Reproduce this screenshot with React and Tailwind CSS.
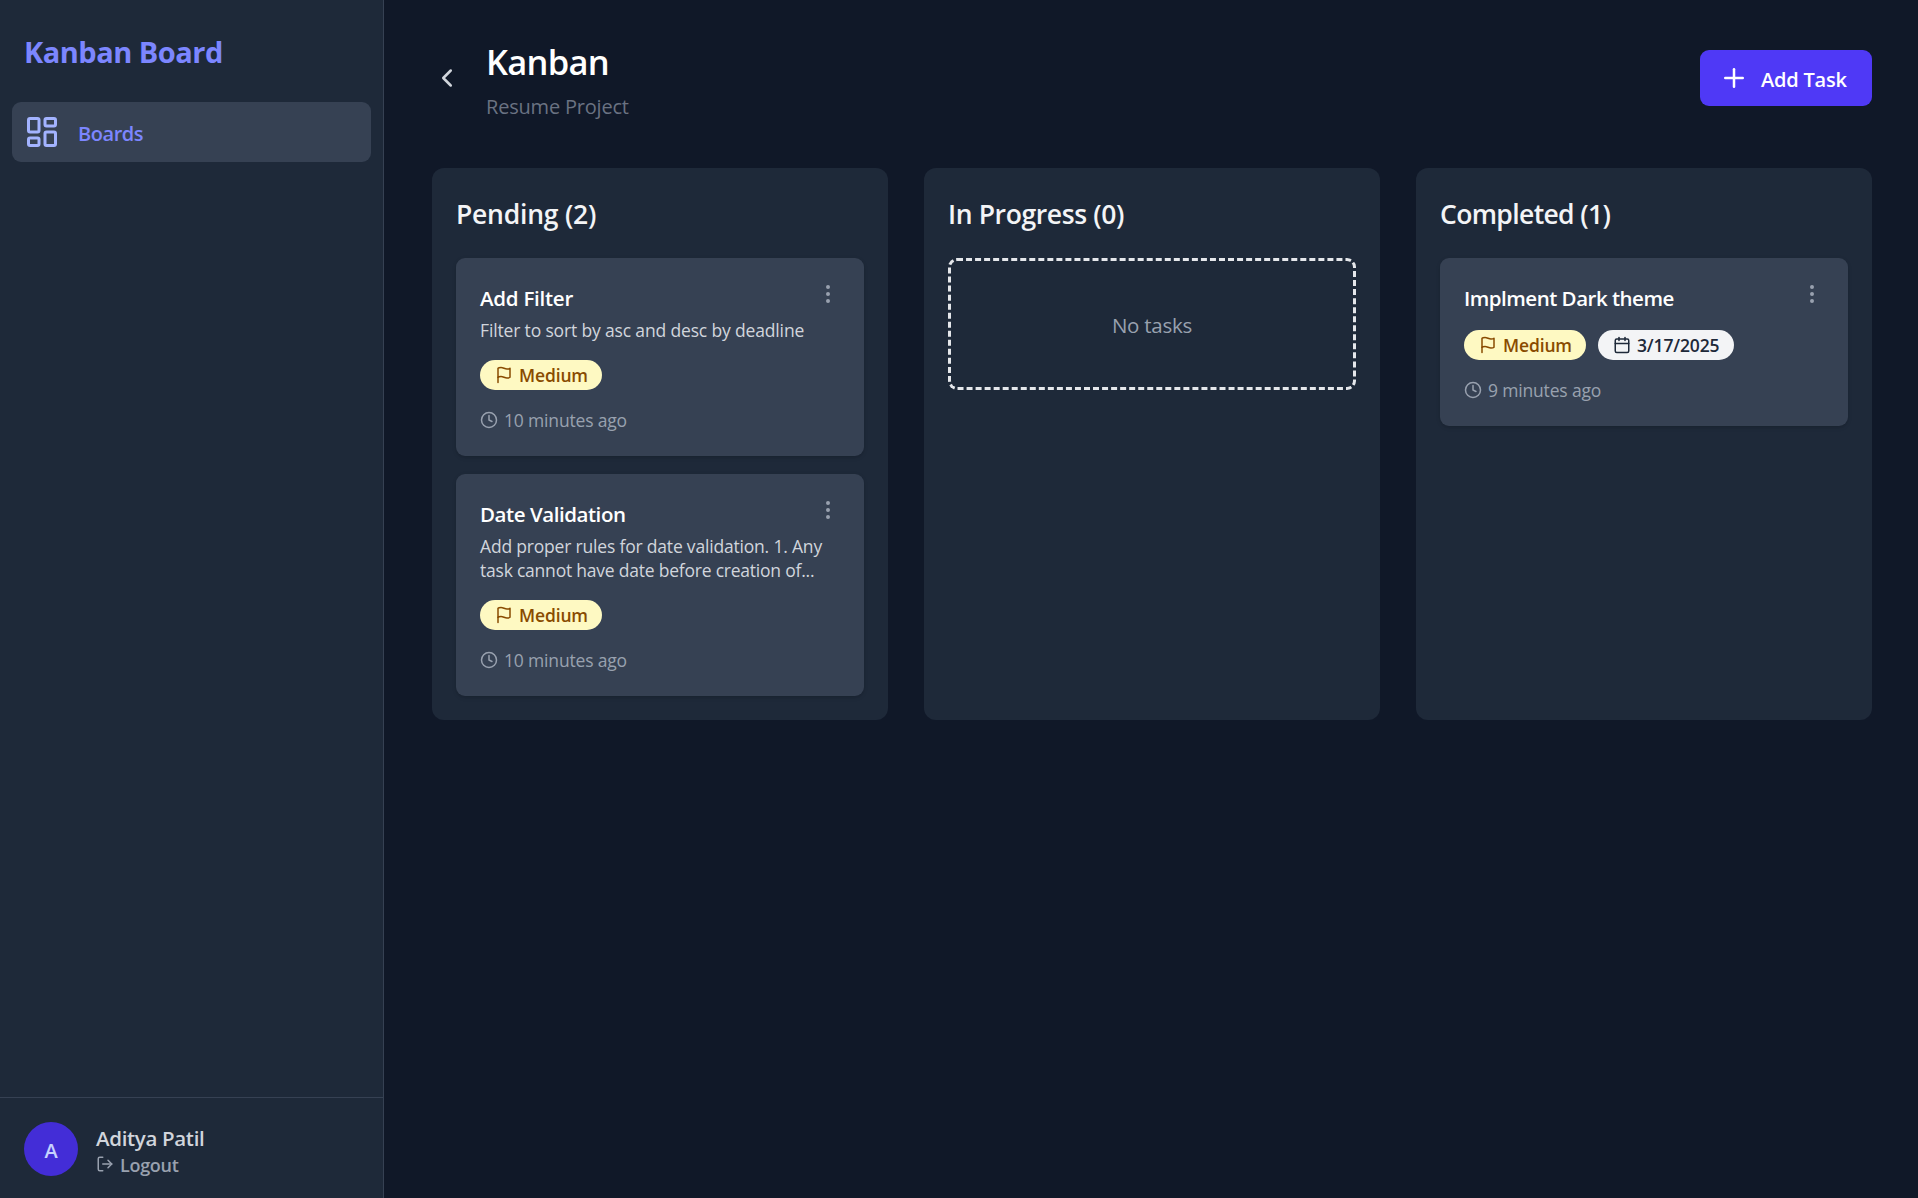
import { Plus, ChevronLeft, LayoutDashboard, Calendar, Clock, EllipsisVertical, LogOut } from "lucide-react";

const Flag = ({ size, className }) => (
  <svg width={size} height={size} viewBox="0 0 24 24" fill="none" stroke="currentColor" strokeWidth="2" strokeLinecap="round" strokeLinejoin="round" className={className}>
    <path d="M4 15s1-1 4-1 5 2 8 2 4-1 4-1V3s-1 1-4 1-5-2-8-2-4 1-4 1z" />
    <path d="M4 22v-7" />
  </svg>
);

const Pill = ({ icon: Icon, className, children }) => (
  <span className={`flex h-[30px] items-center gap-1.5 rounded-full pl-[15px] ${className}`}>
    <Icon size={18} className="shrink-0" />
    <span className="pt-px text-[17.5px] font-semibold tracking-[-0.15px]">{children}</span>
  </span>
);

const Card = ({ title, titleClass, lines, date, ago }) => (
  <article className="rounded-[9px] bg-gray-700 p-6 shadow-[0_1.5px_4.5px_rgba(0,0,0,0.1),0_1.5px_3px_-1.5px_rgba(0,0,0,0.1)]">
    <div className="flex items-start justify-between">
      <h3 className={`h-[30px] whitespace-nowrap text-[20.5px] leading-[32px] font-semibold text-white ${titleClass}`}>{title}</h3>
      <EllipsisVertical size={24} className="text-gray-400" />
    </div>
    {lines && (
      <div className="mt-1.5 text-[17.5px] leading-6 text-gray-300">
        {lines.map(([t, c]) => (
          <p key={t} className={`whitespace-nowrap ${c}`}>{t}</p>
        ))}
      </div>
    )}
    <div className="mt-[18px] flex gap-3">
      <Pill icon={Flag} className="w-[122px] bg-[#fef9c2] text-[#894b00]">Medium</Pill>
      {date && <Pill icon={Calendar} className="w-[136px] bg-gray-100 text-gray-800">{date}</Pill>}
    </div>
    <div className="mt-[18px] flex h-6 items-center gap-1.5 text-gray-400">
      <Clock size={18} />
      <span className="text-[17.5px] leading-6 tracking-[-0.17px] whitespace-nowrap">{ago}</span>
    </div>
  </article>
);

const Column = ({ title, className, children }) => (
  <section className="min-w-0 flex-1 rounded-xl bg-gray-800 p-6">
    <h2 className={`mb-6 h-[42px] whitespace-nowrap text-[26.5px] leading-[44px] font-semibold text-gray-100 ${className}`}>{title}</h2>
    <div className="flex flex-col gap-[18px]">{children}</div>
  </section>
);

export default function App() {
  return (
    <div className="flex h-[1198px] w-[1918px] overflow-hidden bg-gray-900 font-['Open_Sans',sans-serif]">
      <aside className="flex w-96 shrink-0 flex-col border-r border-gray-700 bg-gray-800">
        <h1 className="h-[102px] pt-[29px] pl-6 text-[29px] leading-[45px] font-bold tracking-[-0.5px] text-indigo-400">Kanban Board</h1>
        <nav className="px-3">
          <a className="flex h-[60px] items-center gap-[18px] rounded-[9px] bg-gray-700 pl-3">
            <LayoutDashboard size={36} className="text-indigo-300" />
            <span className="pt-[3px] text-[20px] font-semibold tracking-[-0.45px] text-indigo-400">Boards</span>
          </a>
        </nav>
        <div className="mt-auto flex h-[101px] items-center gap-[18px] border-t border-gray-700 pt-0.5 pl-6">
          <div className="flex size-[54px] items-center justify-center rounded-full bg-indigo-700 pt-1 text-[20px] font-semibold text-indigo-200">A</div>
          <div className="pt-[3px]">
            <p className="text-[20.5px] leading-[27px] font-semibold tracking-[-0.33px] text-gray-300">Aditya Patil</p>
            <button className="flex h-6 items-center gap-1.5 text-gray-400">
              <LogOut size={18} />
              <span className="pt-0.5 text-[18px] font-semibold tracking-[-0.3px]">Logout</span>
            </button>
          </div>
        </div>
      </aside>
      <main className="flex-1 pt-9 pr-[46px] pl-12">
        <header className="flex h-[132px] items-start justify-between">
          <div className="flex">
            <ChevronLeft size={30} className="mt-[27px] text-gray-300" />
            <div className="ml-6">
              <h1 className="h-[54px] text-[34.5px] leading-[52px] font-semibold tracking-[-0.75px] text-white">Kanban</h1>
              <p className="text-[20px] leading-[33px] tracking-[-0.2px] text-gray-500">Resume Project</p>
            </div>
          </div>
          <button className="mt-3.5 flex h-14 w-[172px] items-center gap-3 rounded-[9px] bg-indigo-600 pl-[19px] text-white">
            <Plus size={30} />
            <span className="pt-[3px] text-[20px] font-semibold tracking-[-0.2px] whitespace-nowrap">Add Task</span>
          </button>
        </header>
        <div className="flex h-[552px] gap-9">
          <Column title="Pending (2)" className="tracking-[-0.22px]">
            <Card title="Add Filter" titleClass="tracking-[-0.25px]" lines={[["Filter to sort by asc and desc by deadline", "tracking-[-0.155px]"]]} ago="10 minutes ago" />
            <Card
              title="Date Validation"
              titleClass="tracking-[-0.45px]"
              lines={[
                ["Add proper rules for date validation. 1. Any", "tracking-[-0.19px]"],
                ["task cannot have date before creation of...", "tracking-[-0.22px]"],
              ]}
              ago="10 minutes ago"
            />
          </Column>
          <Column title="In Progress (0)" className="tracking-[-0.38px]">
            <div className="flex h-[132px] items-center justify-center rounded-[9px] border-3 border-dashed border-gray-200 pt-[3px] text-[20.5px] tracking-[-0.25px] text-gray-400">
              <span>No tasks</span>
            </div>
          </Column>
          <Column title="Completed (1)" className="tracking-[-0.63px]">
            <Card title="Implment Dark theme" titleClass="tracking-[-0.5px]" date="3/17/2025" ago="9 minutes ago" />
          </Column>
        </div>
      </main>
    </div>
  );
}
